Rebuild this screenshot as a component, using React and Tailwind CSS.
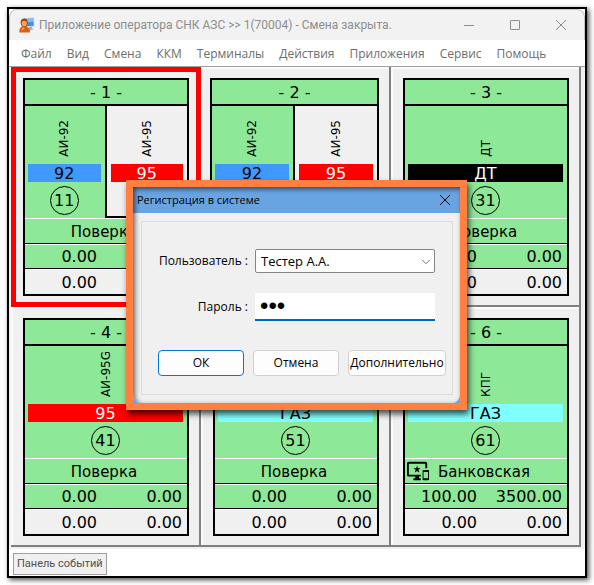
import React, { useState } from 'react';
import clsx from 'clsx';
import { ChevronDown } from 'lucide-react';
import { MdOutlineImportantDevices } from 'react-icons/md';

const menuItems = ['Файл', 'Вид', 'Смена', 'ККМ', 'Терминалы', 'Действия', 'Приложения', 'Сервис', 'Помощь'];

const fuelColors = {
  blue: 'bg-[#4099ff] text-black',
  red: 'bg-[#ff0000] text-white',
  black: 'bg-black text-white',
  cyan: 'bg-[#80ffff] text-black'
};

const pumps = [
  {
    id: 1,
    selected: true,
    nozzles: [
      { name: 'АИ-92', short: '92', color: 'blue', number: 11 },
      { name: 'АИ-95', short: '95', color: 'red', inactive: true }
    ],
    status: 'Поверка',
    totals: [['0.00', '0.00'], ['0.00', '0.00']]
  },
  {
    id: 2,
    nozzles: [
      { name: 'АИ-92', short: '92', color: 'blue' },
      { name: 'АИ-95', short: '95', color: 'red', inactive: true }
    ],
    status: 'Поверка',
    totals: [['0.00', '0.00'], ['0.00', '0.00']]
  },
  {
    id: 3,
    nozzles: [{ name: 'ДТ', short: 'ДТ', color: 'black', number: 31 }],
    status: 'Поверка',
    totals: [['0.00', '0.00'], ['0.00', '0.00']]
  },
  {
    id: 4,
    nozzles: [{ name: 'АИ-95G', short: '95', color: 'red', number: 41 }],
    status: 'Поверка',
    totals: [['0.00', '0.00'], ['0.00', '0.00']]
  },
  {
    id: 5,
    nozzles: [{ name: 'СУГ', short: 'ГАЗ', color: 'cyan', number: 51 }],
    status: 'Поверка',
    totals: [['0.00', '0.00'], ['0.00', '0.00']]
  },
  {
    id: 6,
    nozzles: [{ name: 'КПГ', short: 'ГАЗ', color: 'cyan', number: 61 }],
    status: 'Банковская',
    bank: true,
    totals: [['100.00', '3500.00'], ['0.00', '0.00']]
  }
];

function AppIcon() {
  return (
    <svg viewBox="0 0 16 16" className="w-4 h-4 shrink-0" aria-hidden="true">
      <path d="M5 1.200 15 .6l.6 9-9.600.6z" fill="#c9d3de" />
      <path d="m6 2 8.200-.5.4 7.200-8.200.5z" fill="#3f8fe0" />
      <path d="m6 2 8.200-.5.1 3L6.200 6z" fill="#84bdf3" />
      <path d="m10 10 3-.2.3 1.800 1.700.9-5.500.8z" fill="#a8b1ba" />
      <path d="M.4 15.400c-.4-3 .7-5.400 3-6h3.600c2.600.6 4.200 3 4 6z" fill="#e05a18" />
      <path d="M2.600 14c0-2 .6-3.400 1.800-4l1.400 1.800L7.200 10z" fill="#f6a352" />
      <path d="M1.600 5.400C1.600 3 3.200 1.600 5.200 1.600S8.800 3 8.800 5.400C8.800 8 7.200 10.200 5.200 10.200S1.600 8 1.600 5.400z" fill="#a13a10" />
      <path d="M2.600 6c0-1.500 1-2.200 2.600-2.200S7.900 4.500 7.900 6c0 2-1.200 3.500-2.700 3.500S2.600 8 2.600 6z" fill="#f9a94e" />
    </svg>
  );
}

function TitleBar() {
  return (
    <header className="flex items-center h-[31px] pl-[9px] bg-[#f2f2f2] border border-b-0 border-[#c4c4c4] rounded-t-lg text-[#8d8d8d]">
      <AppIcon />
      <h1 className="flex-1 ml-1 text-xs font-['Roboto',sans-serif] whitespace-nowrap">
        Приложение оператора СНК АЗС &gt;&gt; 1(70004) - Смена закрыта.
      </h1>
      <div className="flex shrink-0">
        <button aria-label="Свернуть" className="w-[46px] h-7 flex items-center justify-center">
          <svg viewBox="0 0 12 12" className="w-3 h-3" stroke="currentColor"><path d="M1 6.500h10" /></svg>
        </button>
        <button aria-label="Развернуть" className="w-[46px] h-7 flex items-center justify-center">
          <svg viewBox="0 0 12 12" className="w-3 h-3" stroke="currentColor" fill="none"><rect x="1.500" y="1.500" width="9" height="9" rx="0.500" /></svg>
        </button>
        <button aria-label="Закрыть" className="w-[46px] h-7 flex items-center justify-center">
          <svg viewBox="0 0 12 12" className="w-3 h-3" stroke="currentColor"><path d="m1 1 10 10M11 1 1 11" /></svg>
        </button>
      </div>
    </header>
  );
}

function Nozzle({ nozzle, side }) {
  return (
    <div
      className={clsx(
        'flex-1 pr-1',
        side ? 'pl-1 border-l-2 border-black' : 'pl-[3px]',
        nozzle.inactive ? 'bg-[#f0f0f0] border-b-2' : 'bg-[#8de897]'
      )}
    >
      <div className="h-[58px] pb-[7px] flex items-end justify-center">
        <span className="[writing-mode:vertical-rl] rotate-180 text-xs leading-4">{nozzle.name}</span>
      </div>
      <div className={clsx('h-[18px] text-center leading-5', fuelColors[nozzle.color])}>{nozzle.short}</div>
      {nozzle.number && (
        <div className="w-[29px] h-[29px] mx-auto mt-1 flex items-center justify-center border border-black rounded-full">
          {nozzle.number}
        </div>
      )}
    </div>
  );
}

function PumpCard({ pump }) {
  return (
    <section
      className={clsx(
        'h-60',
        pump.selected
          ? 'border-[5px] border-[#ff0000] px-[7px] py-1.5'
          : 'border-r-2 border-b-2 border-[#808080] pt-[11px] pb-[9px] pr-2.5 shadow-[inset_2px_2px_0_#fbfbfb]',
        !pump.selected && (pump.id === 2 ? 'pl-[9px]' : 'pl-3')
      )}
    >
      <div className="h-[218px] border-2 border-black bg-[#8de897] text-base leading-6">
        <h2 className="h-[26px] border-b-2 border-black text-center leading-[26px]">- {pump.id} -</h2>
        <div className="flex h-28">
          {pump.nozzles.map((nozzle, i) => (
            <Nozzle key={nozzle.name} nozzle={nozzle} side={i > 0} />
          ))}
        </div>
        <div className="relative h-[26px] pr-1 border-t border-b border-t-white border-b-black text-center text-[15px] leading-[26px]">
          {pump.bank && <MdOutlineImportantDevices className="absolute left-[2px] top-px w-[22px] h-[22px]" />}
          {pump.status}
        </div>
        {pump.totals.map((row, i) => (
          <div
            key={i}
            className={clsx('h-[25px] flex text-right border-t border-white', i === 0 ? 'border-b border-b-black' : 'bg-[#f0f0f0] leading-[26px]')}
          >
            <span className="w-1/2 pr-[9px]">{row[0]}</span>
            <span className="w-1/2 pr-[5px]">{row[1]}</span>
          </div>
        ))}
      </div>
    </section>
  );
}

function LoginDialog() {
  const [user, setUser] = useState('Тестер А.А.');
  const [password, setPassword] = useState('123');

  const buttonClass = 'h-[26px] rounded border bg-[#fdfdfd] text-center';

  return (
    <div
      role="dialog"
      aria-labelledby="login-title"
      className="w-[341px] border-[7px] border-[#ff8040] bg-[#68a4e2] text-xs leading-4 text-black shadow-[2px_4px_6px_rgba(0,0,0,0.7)]"
    >
      <div className="relative rounded-b-lg overflow-hidden bg-[#f0f0f0]">
        <div className="h-[26px] pl-1 flex items-center justify-between bg-[#68a4e2]">
          <h2 id="login-title" className="text-[11px]">Регистрация в системе</h2>
          <button aria-label="Закрыть" className="w-[30px] h-[26px] flex items-center justify-center">
            <svg viewBox="0 0 12 12" className="w-3 h-3" stroke="currentColor"><path d="m1 1 10 10M11 1 1 11" /></svg>
          </button>
        </div>
        <form className="m-2 mr-[7px] border border-[#dcdcdc] pt-[27px] pb-[18px]" onSubmit={(e) => e.preventDefault()}>
          <div className="grid grid-cols-[106px_180px] gap-x-[7px] gap-y-5 items-center">
            <label htmlFor="user" className="text-right whitespace-nowrap">Пользователь :</label>
            <div className="relative">
              <select
                id="user"
                value={user}
                onChange={(e) => setUser(e.target.value)}
                className="block w-full h-6 pl-[5px] appearance-none bg-white border border-[#868686] rounded-[2px] text-[13px] outline-none"
              >
                <option>Тестер А.А.</option>
              </select>
              <ChevronDown className="absolute right-[2px] top-[6px] w-3.5 h-3.5 text-[#606060] pointer-events-none" strokeWidth={1.500} />
            </div>
            <label htmlFor="password" className="text-right whitespace-nowrap">Пароль :</label>
            <input
              id="password"
              type="password"
              value={password}
              onChange={(e) => setPassword(e.target.value)}
              className="w-full h-7 px-[5px] bg-white border-b-2 border-[#0067c0] text-2xl font-['Liberation_Sans',sans-serif] outline-none"
            />
          </div>
          <div className="flex gap-[9px] mt-[29px] pl-4">
            <button type="submit" className={clsx(buttonClass, 'w-[86px] border-[#0078d4]')}>ОК</button>
            <button type="button" className={clsx(buttonClass, 'w-[86px] border-[#d0d0d0]')}>Отмена</button>
            <button type="button" className={clsx(buttonClass, 'w-[98px] border-[#d0d0d0]')}>Дополнительно</button>
          </div>
        </form>
        <div className="absolute inset-0 rounded-b-lg pointer-events-none shadow-[inset_2px_2px_5px_rgba(0,0,0,0.6)]" />
      </div>
    </div>
  );
}

export default function App() {
  return (
    <div className="relative min-h-screen bg-white p-[7px] font-['Open_Sans',sans-serif]">
      <div className="border-2 border-black bg-white shadow-[2px_2px_5px_rgba(0,0,0,0.7)]">
        <TitleBar />
        <nav className="flex items-center gap-[15px] h-[27px] pl-3 pt-px border-b border-[#a0a0a0] text-xs leading-4 text-[#6d6d6d]">
          {menuItems.map((item) => (
            <button key={item}>{item}</button>
          ))}
        </nav>
        <main className="grid grid-cols-3 pl-[2px] pr-1 pb-[2px] bg-[#f0f0f0] text-black font-['DejaVu_Sans',sans-serif]">
          {pumps.map((pump) => (
            <PumpCard key={pump.id} pump={pump} />
          ))}
        </main>
        <footer className="flex items-start h-[27px] pl-1 pt-1">
          <button className="h-[22px] px-[3px] bg-[#f0f0f0] border border-[#a0a0a0] text-[11px] leading-4 font-['Roboto',sans-serif] text-[#505050]">
            Панель событий
          </button>
        </footer>
      </div>

      <div className="absolute inset-0 pt-[5px] pr-px flex items-center justify-center">
        <LoginDialog />
      </div>
    </div>
  );
}
